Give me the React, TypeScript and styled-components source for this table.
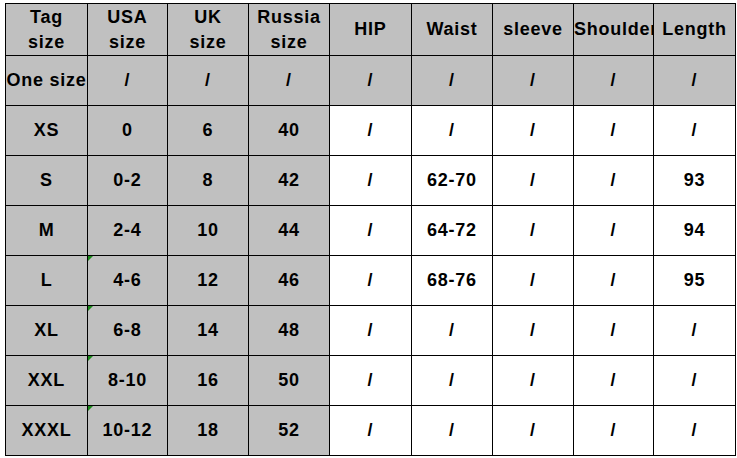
import styled, { createGlobalStyle } from 'styled-components';

const GlobalStyle = createGlobalStyle`
  body {
    margin: 0;
    background: #ffffff;
    font-family: 'Liberation Sans', Arial, sans-serif;
  }
`;

const COL_WIDTHS = [82, 80, 81, 81, 82, 81, 81, 80, 82];

const Page = styled.div`
  padding: 3px 0 0 5px;
`;

const Grid = styled.div`
  display: grid;
  grid-template-columns: ${COL_WIDTHS.map(w => `${w}px`).join(' ')};
  grid-template-rows: 52px repeat(8, 50px);
  border-top: 1px solid #000;
  border-left: 1px solid #000;
  width: max-content;
`;

const Cell = styled.div<{ $shaded: boolean }>`
  position: relative;
  display: flex;
  align-items: center;
  justify-content: safe center;
  text-align: center;
  background: ${p => (p.$shaded ? '#c0c0c0' : '#ffffff')};
  border-right: 1px solid #000;
  border-bottom: 1px solid #000;
  font-size: 18px;
  letter-spacing: 0.75px;
  font-weight: bold;
  color: #000;
  line-height: 25px;
  white-space: nowrap;
  overflow: hidden;
`;

const Marker = styled.span`
  position: absolute;
  top: 0;
  left: 0;
  width: 0;
  height: 0;
  border-top: 5px solid #1a8a1a;
  border-right: 5px solid transparent;
`;

const header = [
  ['Tag', 'size'],
  ['USA', 'size'],
  ['UK', 'size'],
  ['Russia', 'size'],
  ['HIP'],
  ['Waist'],
  ['sleeve'],
  ['Shoulder'],
  ['Length'],
];

const rows: string[][] = [
  ['One size', '/', '/', '/', '/', '/', '/', '/', '/'],
  ['XS', '0', '6', '40', '/', '/', '/', '/', '/'],
  ['S', '0-2', '8', '42', '/', '62-70', '/', '/', '93'],
  ['M', '2-4', '10', '44', '/', '64-72', '/', '/', '94'],
  ['L', '4-6', '12', '46', '/', '68-76', '/', '/', '95'],
  ['XL', '6-8', '14', '48', '/', '/', '/', '/', '/'],
  ['XXL', '8-10', '16', '50', '/', '/', '/', '/', '/'],
  ['XXXL', '10-12', '18', '52', '/', '/', '/', '/', '/'],
];

const flagged = ['L', 'XL', 'XXL', 'XXXL'];

export default function App() {
  return (
    <Page>
      <GlobalStyle />
      <Grid>
        {header.map((lines, i) => (
          <Cell key={`h${i}`} $shaded>
            <div>
              {lines.map(l => (
                <div key={l}>{l}</div>
              ))}
            </div>
          </Cell>
        ))}
        {rows.map((row, r) =>
          row.map((value, c) => (
            <Cell key={`${r}-${c}`} $shaded={r === 0 || c < 4}>
              {c === 1 && flagged.includes(row[0]) && <Marker />}
              {value}
            </Cell>
          ))
        )}
      </Grid>
    </Page>
  );
}
